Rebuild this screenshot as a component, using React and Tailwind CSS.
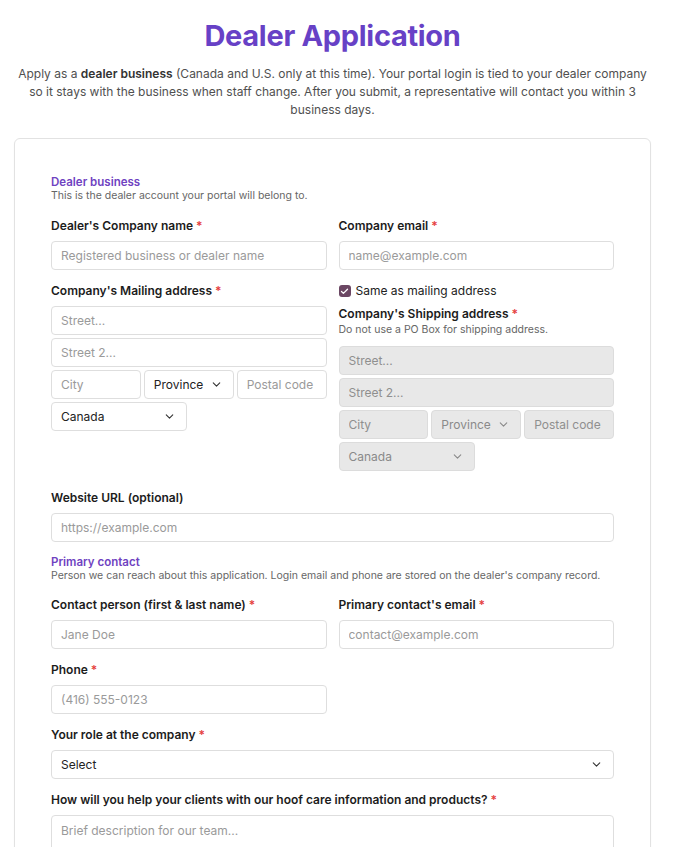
import React from "react";
import { ChevronDown, Check } from "lucide-react";

const font = { fontFamily: "Inter, 'Noto Sans', sans-serif" };

function Label({ children, req }) {
  return (
    <div className="text-[12px] leading-[18px] font-semibold text-[#1c1c1c] mb-[6px]">
      {children}
      {req && <span className="text-[#e53e3e]"> *</span>}
    </div>
  );
}

function Input({ placeholder, disabled, className = "" }) {
  return (
    <input
      disabled={disabled}
      placeholder={placeholder}
      className={
        "block h-[29px] w-full rounded-[4px] border px-[9px] text-[12px] outline-none " +
        (disabled
          ? "bg-[#e8e8e8] border-[#dcdcdc] placeholder:text-[#8f8f8f] "
          : "bg-white border-[#dedede] placeholder:text-[#9a9a9a] ") +
        className
      }
    />
  );
}

function Select({ value, disabled, className = "" }) {
  return (
    <div
      className={
        "flex h-[29px] items-center justify-between rounded-[4px] border pl-[9px] pr-[10px] text-[12px] " +
        (disabled
          ? "bg-[#e8e8e8] border-[#dcdcdc] text-[#8a8a8a] "
          : "bg-white border-[#dedede] text-[#222] ") +
        className
      }
    >
      <span>{value}</span>
      <ChevronDown size={13} strokeWidth={2} className={disabled ? "text-[#8a8a8a]" : "text-[#333]"} />
    </div>
  );
}

function Address({ disabled }) {
  return (
    <div className="flex flex-col gap-[3px]">
      <Input placeholder="Street..." disabled={disabled} />
      <Input placeholder="Street 2..." disabled={disabled} />
      <div className="grid grid-cols-3 gap-[3px]">
        <Input placeholder="City" disabled={disabled} />
        <Select value="Province" disabled={disabled} />
        <Input placeholder="Postal code" disabled={disabled} />
      </div>
      <Select value="Canada" disabled={disabled} className="w-[136px]" />
    </div>
  );
}

function SectionHead({ title, sub }) {
  return (
    <div>
      <div className="text-[11.5px] leading-[14px] font-semibold text-[#6f42c1]">{title}</div>
      <div className="text-[10.5px] leading-[14px] text-[#666]">{sub}</div>
    </div>
  );
}

export default function App() {
  return (
    <div style={font} className="w-[665px] bg-white px-[14px] pt-[18px] text-[#222]">
      <h1 className="text-center text-[29px] leading-[36px] font-bold tracking-[-0.3px] text-[#6741c6]">
        Dealer Application
      </h1>
      <p className="mt-[11px] text-center text-[12px] leading-[18px] text-[#505050]">
        Apply as a <b className="font-semibold text-[#333]">dealer business</b> (Canada and U.S. only at this time). Your portal login is tied to your dealer company so it stays with the business when staff change. After you submit, a representative will contact you within 3 business days.
      </p>
      <div className="mt-[19px] rounded-[6px] border border-[#e2e2e2] px-[36px] pt-[36px] pb-[40px] shadow-[0_1px_2px_rgba(0,0,0,0.04)]">
        <SectionHead title="Dealer business" sub="This is the dealer account your portal will belong to." />
        <div className="mt-[14px] grid grid-cols-2 gap-x-[12px]">
          <div className="flex flex-col gap-[12px]">
            <div>
              <Label req>Dealer's Company name</Label>
              <Input placeholder="Registered business or dealer name" />
            </div>
            <div>
              <Label req>Company's Mailing address</Label>
              <Address />
            </div>
          </div>
          <div className="flex flex-col gap-[12px]">
            <div>
              <Label req>Company email</Label>
              <Input placeholder="name@example.com" />
            </div>
            <div>
              <div className="flex items-center gap-[5px] text-[12px] leading-[18px] text-[#222]">
                <span className="flex h-[12px] w-[12px] items-center justify-center rounded-[3px] bg-[#6b4763]">
                  <Check size={9} strokeWidth={3.5} className="text-white" />
                </span>
                Same as mailing address
              </div>
              <div className="mt-[5px] text-[12px] leading-[18px] font-semibold text-[#1c1c1c]">
                Company's Shipping address<span className="text-[#e53e3e]"> *</span>
              </div>
              <div className="text-[10.5px] leading-[14px] text-[#666] mb-[9px]">
                Do not use a PO Box for shipping address.
              </div>
              <Address disabled />
            </div>
          </div>
        </div>
        <div className="mt-[18px]">
          <Label>Website URL (optional)</Label>
          <Input placeholder="https://example.com" />
        </div>
        <div className="mt-[13px]">
          <SectionHead
            title="Primary contact"
            sub="Person we can reach about this application. Login email and phone are stored on the dealer's company record."
          />
        </div>
        <div className="mt-[13px] grid grid-cols-2 gap-x-[12px] gap-y-[12px]">
          <div>
            <Label req>Contact person (first &amp; last name)</Label>
            <Input placeholder="Jane Doe" />
          </div>
          <div>
            <Label req>Primary contact's email</Label>
            <Input placeholder="contact@example.com" />
          </div>
          <div>
            <Label req>Phone</Label>
            <Input placeholder="(416) 555-0123" />
          </div>
          <div />
        </div>
        <div className="mt-[12px]">
          <Label req>Your role at the company</Label>
          <Select value="Select" />
        </div>
        <div className="mt-[12px]">
          <Label req>How will you help your clients with our hoof care information and products?</Label>
          <textarea
            placeholder="Brief description for our team..."
            className="block h-[80px] w-full resize-none rounded-[4px] border border-[#dedede] px-[9px] py-[6px] text-[12px] outline-none placeholder:text-[#9a9a9a]"
          />
        </div>
      </div>
    </div>
  );
}
